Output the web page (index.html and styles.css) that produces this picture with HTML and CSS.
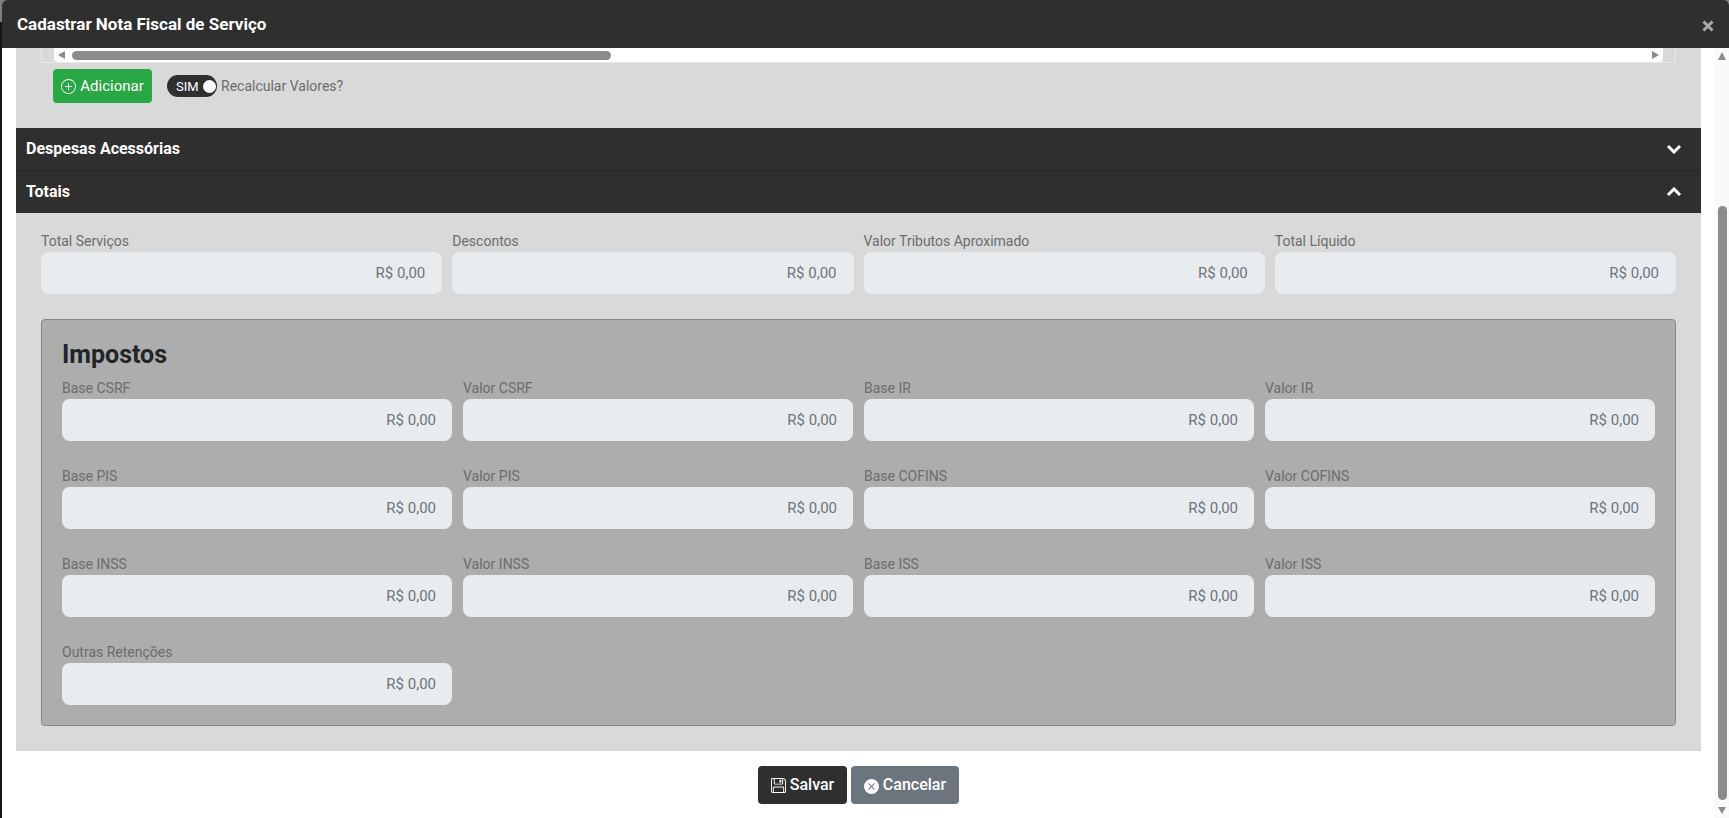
FILE: index.html
```html
<!DOCTYPE html>
<html lang="pt-BR">
<head>
<meta charset="utf-8">
<title>Cadastrar Nota Fiscal de Serviço</title>
<link rel="stylesheet" href="styles.css">
</head>
<body>
<div class="modal">
  <header class="modal-header">
    <h1 class="modal-title">Cadastrar Nota Fiscal de Serviço</h1>
    <svg class="close-icon" viewBox="0 0 12 12" aria-hidden="true"><path d="M1.5 1.5l9 9M10.5 1.5l-9 9"/></svg>
  </header>
  <div class="modal-main">
    <div class="modal-content">
      <div class="panel">
        <div class="hscroll-wrap">
          <div class="hscroll">
            <span class="arrow-left"></span>
            <div class="hscroll-track"><div class="hscroll-thumb"></div></div>
            <span class="arrow-right"></span>
          </div>
        </div>
        <div class="actions">
          <button class="btn btn-green" type="button">
            <svg class="btn-icon" viewBox="0 0 16 16" aria-hidden="true"><path fill="currentColor" d="M8 15A7 7 0 1 1 8 1a7 7 0 0 1 0 14zm0 1A8 8 0 1 0 8 0a8 8 0 0 0 0 16z"/><path fill="currentColor" d="M8 4a.5.5 0 0 1 .5.5v3h3a.5.5 0 0 1 0 1h-3v3a.5.5 0 0 1-1 0v-3h-3a.5.5 0 0 1 0-1h3v-3A.5.5 0 0 1 8 4z"/></svg>
            Adicionar
          </button>
          <span class="toggle"><span class="toggle-text">SIM</span><span class="toggle-knob"></span></span>
          <span class="toggle-label">Recalcular Valores?</span>
        </div>
        <div class="acc-bar acc-first">
          <span class="acc-text">Despesas Acessórias</span>
          <svg class="chevron" viewBox="0 0 16 10" aria-hidden="true"><path d="M2 2l6 6 6-6"/></svg>
        </div>
        <div class="acc-bar">
          <span class="acc-text">Totais</span>
          <svg class="chevron" viewBox="0 0 16 10" aria-hidden="true"><path d="M2 8l6-6 6 6"/></svg>
        </div>
        <div class="totals">
          <div class="grid grid-totals">
            <div class="field"><label class="field-label">Total Serviços</label><div class="field-input">R$ 0,00</div></div>
            <div class="field"><label class="field-label">Descontos</label><div class="field-input">R$ 0,00</div></div>
            <div class="field"><label class="field-label">Valor Tributos Aproximado</label><div class="field-input">R$ 0,00</div></div>
            <div class="field"><label class="field-label">Total Líquido</label><div class="field-input">R$ 0,00</div></div>
          </div>
          <section class="card">
            <h2 class="card-title">Impostos</h2>
            <div class="grid grid-taxes">
              <div class="field"><label class="field-label">Base CSRF</label><div class="field-input">R$ 0,00</div></div>
              <div class="field"><label class="field-label">Valor CSRF</label><div class="field-input">R$ 0,00</div></div>
              <div class="field"><label class="field-label">Base IR</label><div class="field-input">R$ 0,00</div></div>
              <div class="field"><label class="field-label">Valor IR</label><div class="field-input">R$ 0,00</div></div>
              <div class="field"><label class="field-label">Base PIS</label><div class="field-input">R$ 0,00</div></div>
              <div class="field"><label class="field-label">Valor PIS</label><div class="field-input">R$ 0,00</div></div>
              <div class="field"><label class="field-label">Base COFINS</label><div class="field-input">R$ 0,00</div></div>
              <div class="field"><label class="field-label">Valor COFINS</label><div class="field-input">R$ 0,00</div></div>
              <div class="field"><label class="field-label">Base INSS</label><div class="field-input">R$ 0,00</div></div>
              <div class="field"><label class="field-label">Valor INSS</label><div class="field-input">R$ 0,00</div></div>
              <div class="field"><label class="field-label">Base ISS</label><div class="field-input">R$ 0,00</div></div>
              <div class="field"><label class="field-label">Valor ISS</label><div class="field-input">R$ 0,00</div></div>
              <div class="field"><label class="field-label">Outras Retenções</label><div class="field-input">R$ 0,00</div></div>
            </div>
          </section>
        </div>
      </div>
      <footer class="modal-footer">
        <button class="btn btn-dark" type="button">
          <svg class="btn-icon" viewBox="0 0 16 16" aria-hidden="true"><path fill="currentColor" d="M11 2H9v3h2z"/><path fill="currentColor" d="M1.5 0h11.586a1.5 1.5 0 0 1 1.06.44l1.415 1.414A1.5 1.5 0 0 1 16 2.914V14.5a1.5 1.5 0 0 1-1.5 1.5h-13A1.5 1.5 0 0 1 0 14.5v-13A1.5 1.5 0 0 1 1.5 0zM1 1.5v13a.5.5 0 0 0 .5.5H2v-4.5A1.5 1.5 0 0 1 3.5 9h9a1.5 1.5 0 0 1 1.5 1.5V15h.5a.5.5 0 0 0 .5-.5V2.914a.5.5 0 0 0-.146-.353l-1.415-1.415A.5.5 0 0 0 13.086 1H13v4.5A1.5 1.5 0 0 1 11.5 7h-7A1.5 1.5 0 0 1 3 5.5V1H1.5a.5.5 0 0 0-.5.5zm3 4a.5.5 0 0 0 .5.5h7a.5.5 0 0 0 .5-.5V1H4v4.5zM3 15h10v-4.5a.5.5 0 0 0-.5-.5h-9a.5.5 0 0 0-.5.5V15z"/></svg>
          <span class="btn-text">Salvar</span>
        </button>
        <button class="btn btn-gray" type="button">
          <svg class="btn-icon btn-icon-low" viewBox="0 0 16 16" aria-hidden="true"><path fill="currentColor" d="M16 8A8 8 0 1 1 0 8a8 8 0 0 1 16 0zM5.354 4.646a.5.5 0 1 0-.708.708L7.293 8l-2.647 2.646a.5.5 0 0 0 .708.708L8 8.707l2.646 2.647a.5.5 0 0 0 .708-.708L8.707 8l2.647-2.646a.5.5 0 0 0-.708-.708L8 7.293 5.354 4.646z"/></svg>
          <span class="btn-text">Cancelar</span>
        </button>
      </footer>
    </div>
    <div class="vscroll">
      <span class="arrow-up"></span>
      <div class="vscroll-track"><div class="vscroll-thumb"></div></div>
      <span class="arrow-down"></span>
    </div>
  </div>
</div>
</body>
</html>
```
FILE: styles.css
```css
* { box-sizing: border-box; }
html, body { margin: 0; height: 100%; overflow: hidden; }
body { background: linear-gradient(#7e7e7e 22px, #141414 22px); font-family: Roboto, "Liberation Sans", sans-serif; font-size: 14px; color: #6c6c6c; }
.modal { margin-left: 2px; height: 818px; display: flex; flex-direction: column; background: #fff; border-radius: 5px 5px 0 0; overflow: hidden; }
.modal-header { flex: none; height: 48px; background: #2f2f2f; display: flex; align-items: center; justify-content: space-between; padding: 0 15px; }
.modal-title { margin: 0; font-size: 17px; font-weight: 700; color: #fff; }
.close-icon { width: 12px; height: 12px; margin-top: 3px; fill: none; stroke: #a8a8a8; stroke-width: 3; }
.modal-main { flex: 1; min-height: 0; display: flex; }
.modal-content { flex: 1; min-width: 0; display: flex; flex-direction: column; padding: 0 14px; }
.panel { background: #d9d9d9; height: 703px; flex: none; }
.hscroll-wrap { height: 15px; margin: 0 25px; border: 1px solid #e8e8e8; border-top: 0; padding: 0 12px 1px 12px; background: #d9d9d9; }
.hscroll { height: 14px; background: #fff; border-radius: 0 0 4px 4px; display: flex; align-items: center; padding: 0 4px; gap: 7px; }
.hscroll-track { flex: 1; height: 9px; }
.hscroll-thumb { width: 539px; height: 9px; background: #8c8c8c; border-radius: 5px; }
.arrow-left { width: 0; height: 0; border: 4.5px solid transparent; border-left: 0; border-right: 7px solid #8c8c8c; }
.arrow-right { width: 0; height: 0; border: 4.5px solid transparent; border-right: 0; border-left: 7px solid #8c8c8c; }
.actions { display: flex; align-items: center; height: 65px; padding: 6px 0 25px 37px; }
.btn { display: inline-flex; align-items: center; justify-content: center; border: 0; border-radius: 4px; font-family: Roboto, "Liberation Sans", sans-serif; color: #fff; padding: 0; }
.btn-icon { width: 15px; height: 15px; flex: none; }
.btn-icon-low { margin-top: 3px; }
.btn-text { margin-top: -2px; }
.btn-green { width: 99px; height: 34px; background: #28a745; font-size: 15px; gap: 4px; }
.toggle { width: 50px; height: 22px; margin-left: 15px; background: #2f2f2f; border-radius: 11px; display: flex; align-items: center; justify-content: space-between; padding: 0 1px 0 9px; }
.toggle-text { font-size: 13px; color: #fff; }
.toggle-knob { width: 13px; height: 13px; background: #fff; border-radius: 50%; }
.toggle-label { margin-left: 4px; }
.acc-bar { height: 42px; background: #2f2f2f; display: flex; align-items: center; justify-content: space-between; padding: 0 19px 0 10px; color: #fff; font-size: 16px; font-weight: 700; }
.acc-first { height: 43px; border-bottom: 1px solid #282828; }
.acc-text { margin-top: -2px; }
.chevron { width: 16px; height: 10px; fill: none; stroke: #fff; stroke-width: 3; }
.totals { padding: 19px 25px 25px; }
.grid { display: grid; grid-template-columns: repeat(4, 1fr); }
.grid-totals { column-gap: 10px; }
.grid-taxes { column-gap: 11px; row-gap: 26px; }
.field-label { display: block; height: 20px; line-height: 19px; font-size: 14px; color: #6c6c6c; }
.field-input { height: 42px; border-radius: 8px; background: #e9ecef; color: #6c757d; font-size: 15px; line-height: 43px; text-align: right; padding-right: 16px; }
.grid-totals .field-input { padding-right: 17px; }
.card { margin-top: 25px; height: 407px; padding: 20px; background: #adadad; border: 1px solid #858585; border-radius: 4px; }
.card-title { margin: 0; height: 39px; line-height: 29px; font-size: 25px; font-weight: 700; color: #212529; }
.modal-footer { flex: 1; display: flex; justify-content: center; gap: 4px; padding-top: 15px; }
.btn-dark { width: 89px; height: 38px; background: #2f2f2f; font-size: 16px; font-weight: 500; gap: 4px; }
.btn-gray { width: 108px; height: 38px; background: #6c757d; font-size: 16px; font-weight: 500; gap: 4px; }
.vscroll { flex: none; width: 14px; background: #fafafa; display: flex; flex-direction: column; align-items: center; padding: 4px 0; }
.vscroll-track { flex: 1; width: 9px; margin: 4px 0 7px; padding-top: 142px; }
.vscroll-thumb { height: 100%; background: #8c8c8c; border-radius: 5px; }
.arrow-up { width: 0; height: 0; border: 4.5px solid transparent; border-top: 0; border-bottom: 8px solid #8c8c8c; }
.arrow-down { width: 0; height: 0; border: 4.5px solid transparent; border-bottom: 0; border-top: 7px solid #8c8c8c; }
```
